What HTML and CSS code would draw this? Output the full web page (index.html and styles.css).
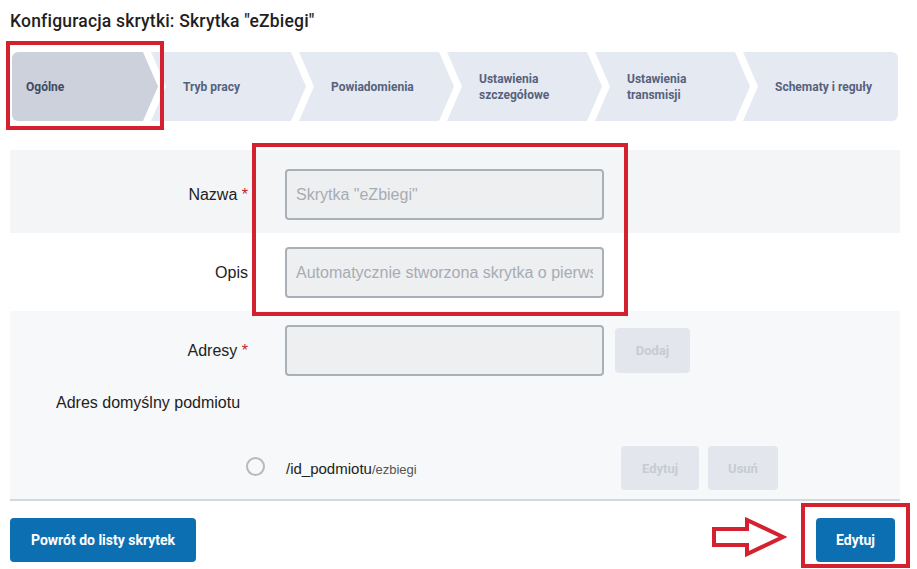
FILE: index.html
```html
<!DOCTYPE html>
<html lang="pl">
<head>
<meta charset="utf-8">
<title>Konfiguracja skrytki</title>
<link rel="stylesheet" href="styles.css">
</head>
<body>
<main class="page">
  <h1 class="title">Konfiguracja skrytki: Skrytka "eZbiegi"</h1>

  <nav class="steps">
    <div class="step step-first step-active"><span>Ogólne</span></div>
    <div class="step"><span>Tryb pracy</span></div>
    <div class="step"><span>Powiadomienia</span></div>
    <div class="step"><span>Ustawienia<br>szczegółowe</span></div>
    <div class="step"><span>Ustawienia<br>transmisji</span></div>
    <div class="step step-last"><span>Schematy i reguły</span></div>
  </nav>

  <form class="form">
    <div class="row row-gray row-first">
      <label class="label">Nazwa <span class="req">*</span></label>
      <input class="input" type="text" placeholder="Skrytka &quot;eZbiegi&quot;" disabled>
    </div>
    <div class="row row-white">
      <label class="label">Opis</label>
      <input class="input" type="text" placeholder="Automatycznie stworzona skrytka o pierwszym uruchomieniu" disabled>
    </div>
    <div class="addr">
      <div class="row">
        <label class="label">Adresy <span class="req">*</span></label>
        <input class="input" type="text" disabled>
        <button class="btn-dis btn-add" type="button">Dodaj</button>
      </div>
      <div class="default-label">Adres domyślny podmiotu</div>
      <div class="addr-item">
        <span class="radio"></span>
        <span class="addr-text"><span class="addr-id">/id_podmiotu</span><span class="addr-name">/ezbiegi</span></span>
        <button class="btn-dis btn-edit" type="button">Edytuj</button>
        <button class="btn-dis btn-del" type="button">Usuń</button>
      </div>
    </div>
  </form>

  <div class="actions">
    <button class="btn-primary btn-back" type="button">Powrót do listy skrytek</button>
    <button class="btn-primary btn-submit" type="button">Edytuj</button>
  </div>

  <div class="mark mark-step"></div>
  <div class="mark mark-inputs"></div>
  <div class="mark mark-submit"></div>
  <svg class="arrow" width="76" height="42" viewBox="0 0 76 42">
    <path d="M3 12 H36 V3 L72 20 L36 37 V28 H3 Z" fill="#fff" stroke="#d3212f" stroke-width="4" stroke-linejoin="miter"/>
  </svg>
</main>
</body>
</html>
```

FILE: styles.css
```css
* { box-sizing: border-box; }

html, body {
  margin: 0;
  padding: 0;
  background: #fff;
}

body {
  font-family: "Liberation Sans", Arial, sans-serif;
  color: #222;
}

.page {
  position: relative;
  width: 917px;
  height: 569px;
  padding: 0 17px 0 10px;
  overflow: hidden;
}

.title {
  margin: 0;
  padding-top: 11px;
  font-family: Roboto, "Liberation Sans", sans-serif;
  font-weight: 500;
  font-size: 17.5px;
  letter-spacing: 0.2px;
  line-height: 20px;
  color: #1f1f1f;
}

/* ---------- stepper ---------- */
.steps {
  display: flex;
  margin: 21px 0 0 2px;
  height: 69px;
}

.step {
  width: 155px;
  height: 69px;
  margin-left: -7px;
  background: #e5e9f2;
  clip-path: polygon(0 0, 140px 0, 155px 50%, 140px 100%, 0 100%, 15px 50%);
  display: flex;
  align-items: center;
  padding-left: 32px;
  font-family: Roboto, "Liberation Sans", sans-serif;
  font-weight: 700;
  font-size: 12px;
  line-height: 16px;
  color: #56627c;
}

.step-first {
  width: 146px;
  margin-left: 0;
  padding-left: 14px;
  border-radius: 6px 0 0 6px;
  clip-path: polygon(0 0, 131px 0, 146px 50%, 131px 100%, 0 100%);
}

.step-active {
  background: #ccd1db;
  color: #404a60;
}

.step-last {
  width: 155px;
  border-radius: 0 6px 6px 0;
  clip-path: polygon(0 0, 100% 0, 100% 100%, 0 100%, 15px 50%);
}

/* ---------- form ---------- */
.form {
  width: 890px;
  margin-top: 29px;
}

.row {
  display: grid;
  grid-template-columns: 238px 319px 75px;
  column-gap: 37px;
  align-items: center;
  padding: 14px 0 13px;
}

.row-first { padding-top: 19px; }

.row-gray { background: #f4f5f7; }
.row-white { background: #fff; }

.label {
  text-align: right;
  font-size: 16px;
  color: #222;
}

.req { color: #c3232d; }

.input {
  width: 319px;
  height: 51px;
  border: 2px solid #aab0b8;
  border-radius: 4px;
  background: #eeeff1;
  padding: 0 9px;
  font-family: "Liberation Sans", Arial, sans-serif;
  font-size: 16px;
  color: #9ea4ad;
}

.input::placeholder { color: #a6acb5; opacity: 1; }

.addr {
  background: #f7f8fa;
  border-bottom: 2px solid #d5d7de;
  height: 190px;
}

.addr .row { column-gap: 0; grid-template-columns: 238px 37px 319px 11px 75px; }
.addr .row .label { grid-column: 1; }
.addr .row .input { grid-column: 3; }
.addr .row .btn-add { grid-column: 5; }

.btn-dis {
  border: 0;
  border-radius: 4px;
  background: #e3e6ec;
  color: #c7cbd3;
  font-family: Roboto, "Liberation Sans", sans-serif;
  font-weight: 700;
  font-size: 13px;
  height: 45px;
  padding: 0;
}

.btn-add { width: 75px; }

.default-label {
  padding-left: 46px;
  margin-top: 4px;
  font-size: 16px;
  line-height: 20px;
  color: #222;
}

.addr-item {
  display: flex;
  align-items: center;
  margin-top: 33px;
  padding-left: 236px;
}

.radio {
  width: 19px;
  height: 19px;
  border: 2px solid #b9b9b9;
  border-radius: 50%;
  background: #f7f8fa;
  margin-right: 21px;
  margin-top: -4px;
}

.addr-text {
  width: 335px;
  font-size: 15px;
  color: #222;
}

.addr-name {
  font-size: 13px;
  color: #555;
}

.btn-edit { width: 78px; margin-right: 9px; height: 44px; }
.btn-del { width: 70px; height: 44px; }

/* ---------- actions ---------- */
.actions {
  display: flex;
  justify-content: space-between;
  margin-top: 17px;
  padding-right: 5px;
}

.btn-primary {
  height: 44px;
  border: 0;
  border-radius: 4px;
  background: #0c6fb2;
  color: #fff;
  font-family: Roboto, "Liberation Sans", sans-serif;
  font-weight: 700;
  font-size: 14px;
  padding: 0;
}

.btn-back { width: 186px; }
.btn-submit { width: 79px; }

/* ---------- annotations ---------- */
.mark {
  position: absolute;
  border: 4px solid #d3212f;
}

.mark-step { left: 6px; top: 41px; width: 158px; height: 89px; }
.mark-inputs { left: 252px; top: 143px; width: 376px; height: 173px; }
.mark-submit { left: 801px; top: 503px; width: 109px; height: 65px; }

.arrow {
  position: absolute;
  left: 711px;
  top: 517px;
}
```
